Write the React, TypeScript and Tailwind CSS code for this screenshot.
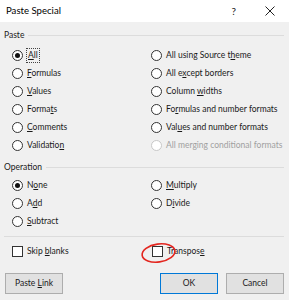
import React from "react";

const F = { fontFamily: 'Lato, "Noto Sans", sans-serif' };

function Radio({ checked = false, disabled = false }: { checked?: boolean; disabled?: boolean }) {
  return (
    <span
      className={`flex h-[11px] w-[11px] shrink-0 items-center justify-center rounded-full border bg-white ${
        disabled ? "border-[#c8c8c8]" : "border-[#333333]"
      }`}
    >
      {checked && <span className="h-[5px] w-[5px] rounded-full bg-[#111111]" />}
    </span>
  );
}

function Check() {
  return <span className="h-[11px] w-[11px] shrink-0 border border-[#333333] bg-white" />;
}

function Label({ pre, u, post, disabled = false, focus = false }: { pre: string; u: string; post: string; disabled?: boolean; focus?: boolean }) {
  return (
    <span
      className={`ml-[4px] whitespace-nowrap leading-[13px] ${disabled ? "text-[#a0a0a0]" : "text-[#1a1a1a]"} ${
        focus ? "outline outline-1 outline-dotted outline-[#444] outline-offset-0 px-[1px]" : ""
      }`}
    >
      {pre}
      {u && <u className="underline-offset-[1px]">{u}</u>}
      {post}
    </span>
  );
}

function Opt(props: { pre: string; u: string; post: string; checked?: boolean; disabled?: boolean; focus?: boolean }) {
  return (
    <div className="flex h-[18px] items-center">
      <Radio checked={props.checked} disabled={props.disabled} />
      <Label pre={props.pre} u={props.u} post={props.post} disabled={props.disabled} focus={props.focus} />
    </div>
  );
}

function Header({ text }: { text: string }) {
  return (
    <div className="flex h-[14px] items-center pl-[4px] pr-[5px]">
      <span className="text-[#1a1a1a]">{text}</span>
      <span className="ml-[4px] h-px flex-1 bg-[#dcdcdc]" />
    </div>
  );
}

export default function App() {
  return (
    <div className="flex h-[300px] w-[289px] flex-col overflow-hidden bg-[#f0f0f0] text-[8.5px]" style={F}>
      <div className="flex h-[22px] items-center bg-white pl-[6px] pr-[14px]">
        <span className="text-[9.6px] text-black">Paste Special</span>
        <span className="ml-auto mr-[29px] text-[10px] text-[#222]">?</span>
        <svg width="10" height="10" viewBox="0 0 10 10">
          <path d="M0.5 0.5 L9.5 9.5 M9.5 0.5 L0.5 9.5" stroke="#222" strokeWidth="1" />
        </svg>
      </div>
      <div className="relative flex flex-col pt-[6px]">
        <Header text="Paste" />
        <div className="mt-[4px] grid grid-cols-[139px_1fr] pl-[12px]">
          <Opt pre="" u="A" post="ll" checked focus />
          <Opt pre="All using Source t" u="h" post="eme" />
          <Opt pre="" u="F" post="ormulas" />
          <Opt pre="All e" u="x" post="cept borders" />
          <Opt pre="" u="V" post="alues" />
          <Opt pre="Column " u="w" post="idths" />
          <Opt pre="Forma" u="t" post="s" />
          <Opt pre="Fo" u="r" post="mulas and number formats" />
          <Opt pre="" u="C" post="omments" />
          <Opt pre="Val" u="u" post="es and number formats" />
          <Opt pre="Validatio" u="n" post="" />
          <Opt pre="All merging conditional formats" u="" post="" disabled />
        </div>
        <div className="mt-[6px]">
          <Header text="Operation" />
        </div>
        <div className="mt-[2px] grid grid-cols-[139px_1fr] pl-[12px]">
          <Opt pre="N" u="o" post="ne" checked />
          <Opt pre="" u="M" post="ultiply" />
          <Opt pre="A" u="d" post="d" />
          <Opt pre="D" u="i" post="vide" />
          <Opt pre="" u="S" post="ubtract" />
        </div>
        <div className="ml-[4px] mr-[5px] mt-[6px] h-px bg-[#dcdcdc]" />
        <div className="mt-[5px] grid grid-cols-[140px_1fr] pl-[12px]">
          <div className="flex h-[18px] items-center">
            <Check />
            <Label pre="Skip " u="b" post="lanks" />
          </div>
          <div className="flex h-[18px] items-center">
            <Check />
            <Label pre="Transpos" u="e" post="" />
          </div>
        </div>
        <div className="mt-[13px] flex px-[5px]">
          <button className="h-[21px] w-[58px] border border-[#adadad] bg-[#e1e1e1] text-[#1a1a1a]">
            Paste <u>L</u>ink
          </button>
          <button className="ml-auto h-[21px] w-[58px] border border-[#0078d7] bg-[#e1e1e1] text-[#1a1a1a]">OK</button>
          <button className="ml-[8px] h-[21px] w-[58px] border border-[#adadad] bg-[#e1e1e1] text-[#1a1a1a]">Cancel</button>
        </div>
        <svg className="absolute left-[139px] top-[218px]" width="40" height="26" viewBox="0 0 40 26">
          <ellipse cx="19.5" cy="13" rx="16.5" ry="9" transform="rotate(-8 19.5 13)" fill="none" stroke="#e3261f" strokeWidth="1.6" />
        </svg>
      </div>
    </div>
  );
}
